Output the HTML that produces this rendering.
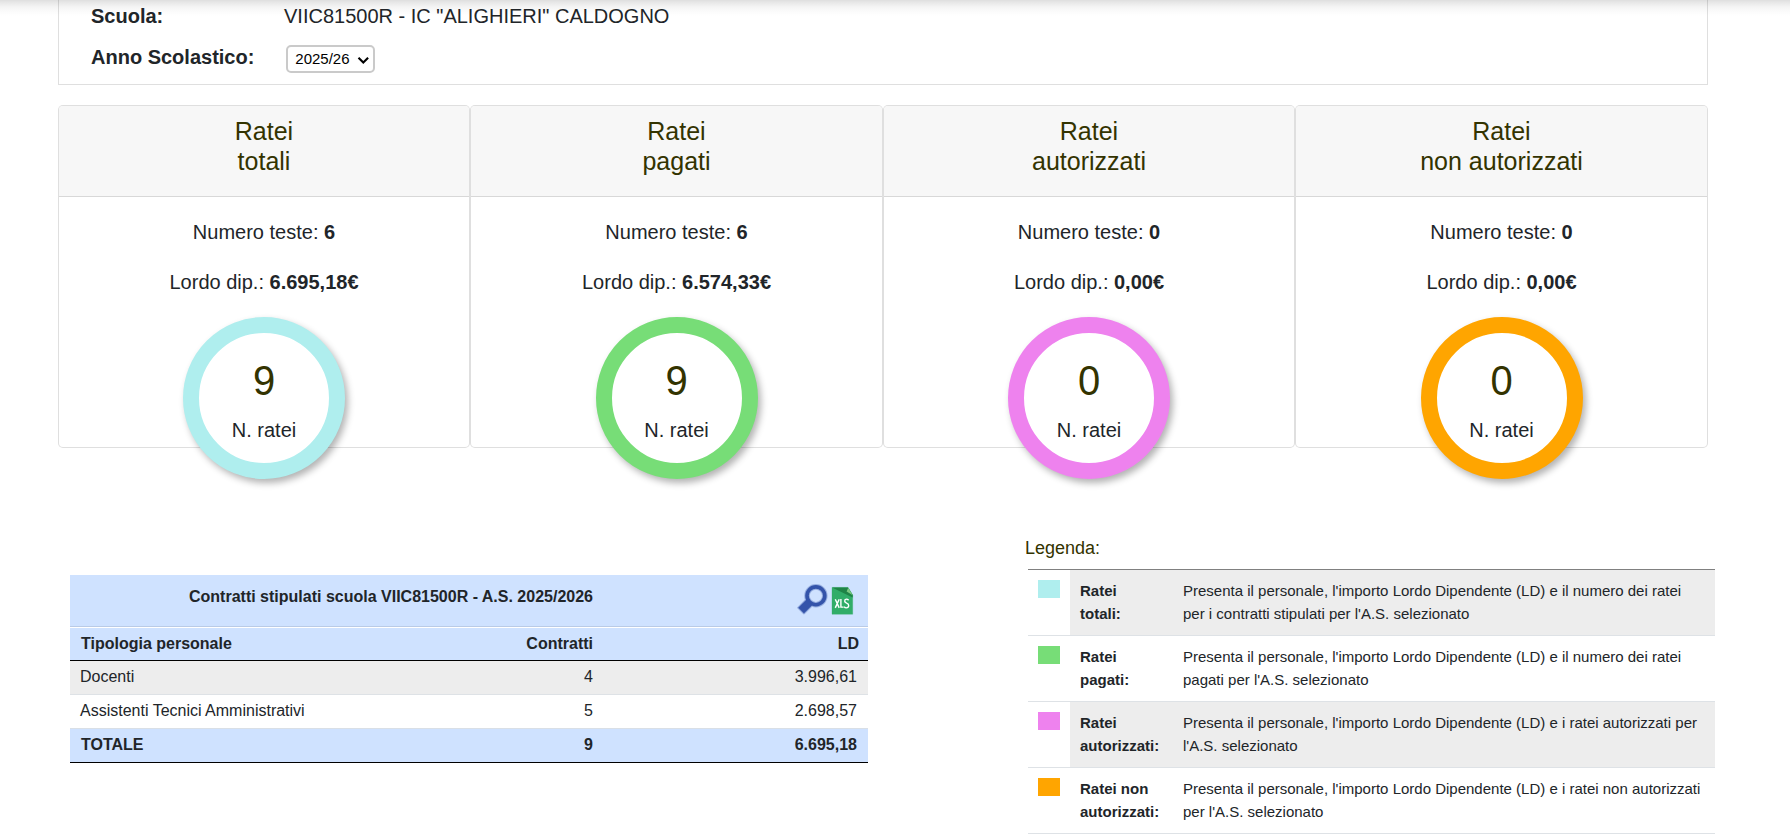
<!DOCTYPE html>
<html><head><meta charset="utf-8">
<style>
*{box-sizing:border-box;margin:0;padding:0}
html,body{width:1790px;height:837px;overflow:hidden;background:#fff}
body{font-family:"Liberation Sans",sans-serif;color:#212529;position:relative}
.topshadow{position:absolute;left:0;top:0;width:1790px;height:18px;z-index:10;pointer-events:none;
 background:linear-gradient(to bottom,rgba(0,0,0,.13) 0px,rgba(0,0,0,.085) 3px,rgba(0,0,0,.045) 7px,rgba(0,0,0,.018) 11px,rgba(0,0,0,0) 16px)}
.info{position:absolute;left:58px;top:-20px;width:1650px;height:105px;border:1px solid #dfdfdf;border-top:none}
.lbl{position:absolute;font-weight:bold;font-size:20px;line-height:23px}
.val{position:absolute;font-size:20px;line-height:23px}
.sel{position:absolute;left:286px;top:45px;width:89px;height:28px;border:2px solid #cacaca;border-radius:5px;font-size:15px}
.sel span{position:absolute;left:7.3px;top:3px;line-height:17px;color:#000}
.sel svg{position:absolute;left:69px;top:9px}
.cards{position:absolute;left:58px;top:105px;width:1650px;height:343px}
.card{position:absolute;top:0;width:413px;height:343px;border:1px solid rgba(0,0,0,.125);border-radius:5px;background:#fff}
.chead{height:91px;background:#f7f7f7;border-bottom:1px solid rgba(0,0,0,.125);border-radius:4px 4px 0 0;text-align:center;padding-top:10px;color:#333300;font-size:25px;line-height:30px}
.cbody{text-align:center;padding-top:20px;font-size:20px;line-height:30px}
.cbody p{margin-bottom:20px}
.circle{position:absolute;width:162px;height:162px;border-radius:50%;border:16px solid #aeeaeb;background:#fff;box-shadow:3px 4px 7px rgba(0,0,0,.3);z-index:2}
.num{position:absolute;left:0;width:130px;text-align:center;font-size:40px;line-height:46px;color:#333300;transform:scaleY(1.04);transform-origin:50% 11px}
.nr{position:absolute;left:0;width:130px;text-align:center;font-size:20px;line-height:23px}

.tbl{position:absolute;left:70px;top:575px;width:798px;font-size:16px;color:#212529}
.tr{position:absolute;left:0;width:798px;line-height:31px}
.tr .c1{position:absolute;left:10px;top:0}
.tr .c2{position:absolute;right:275px;top:0}
.tr .c3{position:absolute;right:9px;top:0}
.b{font-weight:bold}
.leg-title{position:absolute;left:1025px;top:536px;font-size:18px;line-height:24px;color:#333300}
.leg{position:absolute;left:1028px;top:569px;width:687px;height:265px;border-top:1px solid #808080;font-size:15px;line-height:23px;color:#212529}
.lr{position:absolute;left:0;width:687px;height:66px;border-bottom:1px solid #dee2e6}
.lr.g .bg{position:absolute;left:42px;top:0;right:0;bottom:0;background:#ededed}
.sw{position:absolute;left:10px;top:10px;width:22px;height:18px}
.lt{position:absolute;left:52px;top:9px;font-weight:bold}
.ld{position:absolute;left:155px;top:9px}
</style></head><body>
<div class="topshadow"></div>
<div class="info">
 <div class="lbl" style="left:32px;top:25px">Scuola:</div>
 <div class="val" style="left:225px;top:25px">VIIC81500R - IC "ALIGHIERI" CALDOGNO</div>
 <div class="lbl" style="left:32px;top:66px">Anno Scolastico:</div>
</div>
<div class="sel"><span>2025/26</span><svg width="13" height="9" viewBox="0 0 13 9"><path d="M1.5 1.8 L6.3 6.6 L11.1 1.8" fill="none" stroke="#000" stroke-width="2.1"/></svg></div>

<div class="cards">
 <div class="card" style="left:0;width:412px">
  <div class="chead">Ratei<br>totali</div>
  <div class="cbody"><p>Numero teste: <b>6</b></p><p>Lordo dip.: <b>6.695,18€</b></p></div>
 </div>
 <div class="card" style="left:412px;width:413px">
  <div class="chead">Ratei<br>pagati</div>
  <div class="cbody"><p>Numero teste: <b>6</b></p><p>Lordo dip.: <b>6.574,33€</b></p></div>
 </div>
 <div class="card" style="left:825px;width:412px">
  <div class="chead">Ratei<br>autorizzati</div>
  <div class="cbody"><p>Numero teste: <b>0</b></p><p>Lordo dip.: <b>0,00€</b></p></div>
 </div>
 <div class="card" style="left:1237px;width:413px">
  <div class="chead">Ratei<br>non autorizzati</div>
  <div class="cbody"><p>Numero teste: <b>0</b></p><p>Lordo dip.: <b>0,00€</b></p></div>
 </div>
</div>
<div class="circle" style="left:183px;top:317px;border-color:#afeeee"><div class="num" style="top:24px">9</div><div class="nr" style="top:86px">N. ratei</div></div>
<div class="circle" style="left:595.5px;top:317px;border-color:#77dd77"><div class="num" style="top:24px">9</div><div class="nr" style="top:86px">N. ratei</div></div>
<div class="circle" style="left:1008px;top:317px;border-color:#ee82ee"><div class="num" style="top:24px">0</div><div class="nr" style="top:86px">N. ratei</div></div>
<div class="circle" style="left:1420.5px;top:317px;border-color:#ffa500"><div class="num" style="top:24px">0</div><div class="nr" style="top:86px">N. ratei</div></div>

<div class="tbl">
 <div style="position:absolute;left:0;top:0;width:798px;height:52px;background:#cfe2ff;border-bottom:1px solid #bacbe6"></div>
 <div class="tr b" style="top:6px"><span class="c2" style="white-space:nowrap">Contratti stipulati scuola VIIC81500R - A.S. 2025/2026</span></div>
 <div style="position:absolute;left:0;top:53px;width:798px;height:33px;background:#cfe2ff;border-bottom:1px solid #000"></div>
 <div class="tr b" style="top:53px"><span class="c1" style="left:11px">Tipologia personale</span><span class="c2">Contratti</span><span class="c3">LD</span></div>
 <div style="position:absolute;left:0;top:86px;width:798px;height:34px;background:#ededed;border-bottom:1px solid #dee2e6"></div>
 <div class="tr" style="top:86px"><span class="c1">Docenti</span><span class="c2">4</span><span class="c3" style="right:11px">3.996,61</span></div>
 <div style="position:absolute;left:0;top:120px;width:798px;height:34px;background:#fff;border-bottom:1px solid #d9dfe6"></div>
 <div class="tr" style="top:120px"><span class="c1">Assistenti Tecnici Amministrativi</span><span class="c2">5</span><span class="c3" style="right:11px">2.698,57</span></div>
 <div style="position:absolute;left:0;top:154px;width:798px;height:34px;background:#cfe2ff;border-bottom:1px solid #000"></div>
 <div class="tr b" style="top:154px"><span class="c1" style="left:11px">TOTALE</span><span class="c2">9</span><span class="c3" style="right:11px">6.695,18</span></div>
</div>
<div class="leg-title">Legenda:</div>
<div class="leg">
 <div class="lr g" style="top:0"><div class="bg"></div><div class="sw" style="background:#afeeee"></div><div class="lt">Ratei<br>totali:</div><div class="ld">Presenta il personale, l'importo Lordo Dipendente (LD) e il numero dei ratei<br>per i contratti stipulati per l'A.S. selezionato</div></div>
 <div class="lr" style="top:66px"><div class="sw" style="background:#77dd77"></div><div class="lt">Ratei<br>pagati:</div><div class="ld">Presenta il personale, l'importo Lordo Dipendente (LD) e il numero dei ratei<br>pagati per l'A.S. selezionato</div></div>
 <div class="lr g" style="top:132px"><div class="bg"></div><div class="sw" style="background:#ee82ee"></div><div class="lt">Ratei<br>autorizzati:</div><div class="ld">Presenta il personale, l'importo Lordo Dipendente (LD) e i ratei autorizzati per<br>l'A.S. selezionato</div></div>
 <div class="lr" style="top:198px"><div class="sw" style="background:#ffa500"></div><div class="lt">Ratei non<br>autorizzati:</div><div class="ld">Presenta il personale, l'importo Lordo Dipendente (LD) e i ratei non autorizzati<br>per l'A.S. selezionato</div></div>
</div>

<svg style="position:absolute;left:790px;top:578px" width="70" height="42" viewBox="790 578 70 42">
 <g opacity="0.35"><circle cx="815.9" cy="595.8" r="8.9" fill="none" stroke="#3454aa" stroke-width="5.6"/>
 <path d="M812.29 604.92 L803.95 613.27 L798.43 607.75 L806.78 599.41 Z" fill="#3454aa" stroke="#3454aa" stroke-width="2.4" stroke-linejoin="round"/></g>
 <circle cx="815.9" cy="595.8" r="8.9" fill="none" stroke="#3454aa" stroke-width="3.6"/>
 <path d="M812.29 604.92 L803.95 613.27 L798.43 607.75 L806.78 599.41 Z" fill="#3454aa" stroke="#3454aa" stroke-width="0.4" stroke-linejoin="round"/>
 <path d="M832 587.4 H848 L852.7 595.1 V614.2 H832 Z" fill="#31ad68" stroke="#31ad68" stroke-opacity="0.4" stroke-width="0.8"/>
 <path d="M832 587.4 H848 L852.7 595.1 V597.6 Z" fill="#1f8447"/>
 <path d="M848.2 587.8 L852.7 595.2 L846.6 591.6 Z" fill="#7cc982"/>
 <g fill="none" stroke="#fff" stroke-width="1.4">
  <path d="M835.3 599.2 L839.2 607.9 M839.2 599.2 L835.3 607.9"/>
  <path d="M840.9 599 V607.1 H843.6"/>
  <path d="M848.6 600.3 Q847.6 599 846.3 599.1 Q844.6 599.3 844.7 601.1 Q844.8 602.5 846.6 603.1 Q848.8 603.9 848.7 605.8 Q848.5 607.9 846.4 607.9 Q844.9 607.9 844.2 606.6"/>
 </g>
</svg>
</body></html>
